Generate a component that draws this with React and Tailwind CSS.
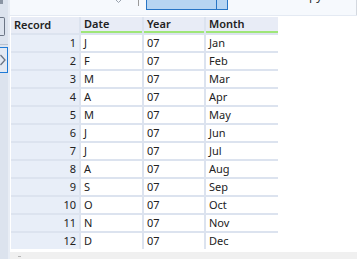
const months = ["Jan", "Feb", "Mar", "Apr", "May", "Jun", "Jul", "Aug", "Sep", "Oct", "Nov", "Dec"];

const rows = months.map((m, i) => ({ record: i + 1, date: m[0], year: "07", month: m }));

export default function App() {
    return (
        <div className="flex w-[357px] h-[259px] overflow-hidden bg-white text-[#222] font-['Noto_Sans',sans-serif]">
            {/* left strip */}
            <div className="w-[10px] shrink-0 bg-[#dce3ee] border-r-2 border-[#e8edf5] flex flex-col">
                <div className="h-[4px] w-[3px] bg-[#8a94a3] mt-0" />
                <div className="mt-[13px] h-[19px] w-[5px] border border-l-0 border-[#6b7585] rounded-r-[2px]" />
                <div className="mt-[8px] h-px w-[8px] bg-[#b9c2d0]" />
                <div className="mt-[2px] h-[26px] w-[8px] border border-l-0 border-[#1f7ad6] bg-[#e3e9f3] flex items-center">
                    <svg width="6" height="12" viewBox="0 0 6 12" fill="none">
                        <path d="M0.5 1 L5 6 L0.5 11" stroke="#6b7585" strokeWidth="1.3" />
                    </svg>
                </div>
            </div>

            <div className="flex-1 flex flex-col">
                {/* top toolbar (cut off) */}
                <div className="h-[16px] shrink-0 bg-[#f6f9fd] border-b border-[#e4eaf3] flex items-start overflow-hidden">
                    <div className="ml-[106px] mt-0">
                        <svg width="5" height="3" viewBox="0 0 5 3"><path d="M0 0 L2.5 2.5 L5 0" stroke="#9aa3ae" fill="none" /></svg>
                    </div>
                    <div className="ml-[17px] h-[6px] w-px bg-[#9a9a9a]" />
                    <div className="ml-[7px] -mt-px h-[11px] w-[82px] border border-[#2775c6] bg-[#b7d5f2] flex">
                        <div className="ml-[69px] h-full w-px bg-[#2775c6]" />
                    </div>
                    <div className="ml-[81px] -mt-[10px] text-[12px] leading-[12px] text-[#333]">py</div>
                    <div className="ml-auto h-[15px] w-px bg-[#d3d8df]" />
                </div>

                {/* table */}
                <div className="flex-1 pl-[1px] pt-px">
                    <div className="grid w-fit grid-cols-[68px_61px_60px_72px] gap-[2px] bg-[#dce3ef] text-[11px] leading-[16px]">
                        <div className="h-[16px] bg-[#e8ecf6] pl-[3px] font-semibold">Record</div>
                        <div className="h-[16px] bg-[#e8ecf6] pl-[3px] font-semibold border-b-2 border-[#9fe678] leading-[14px]">Date</div>
                        <div className="h-[16px] bg-[#e8ecf6] pl-[3px] font-semibold border-b-2 border-[#9fe678] leading-[14px]">Year</div>
                        <div className="h-[16px] bg-[#e8ecf6] pl-[3px] font-semibold border-b-2 border-[#9fe678] leading-[14px]">Month</div>
                        {rows.map((r) => (
                            <>
                                <div key={"r" + r.record} className="h-[16px] bg-[#e8eef8] pr-[3px] text-right">{r.record}</div>
                                <div key={"d" + r.record} className="h-[16px] bg-white pl-[3px]">{r.date}</div>
                                <div key={"y" + r.record} className="h-[16px] bg-white pl-[3px]">{r.year}</div>
                                <div key={"m" + r.record} className="h-[16px] bg-white pl-[3px]">{r.month}</div>
                            </>
                        ))}
                    </div>
                </div>

                {/* bottom scroll bar */}
                <div className="h-[7px] shrink-0 bg-[#f0f0f0] pl-[8px] pt-[4px]">
                    <div className="h-px w-[3px] bg-[#b5b5b5]" />
                </div>
            </div>
        </div>
    );
}
